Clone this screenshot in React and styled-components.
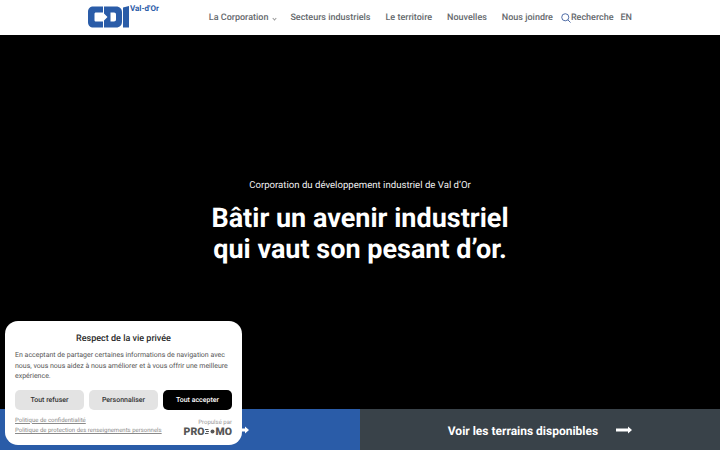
import React from 'react';
import styled, { createGlobalStyle } from 'styled-components';

const GlobalStyle = createGlobalStyle`
  html, body {
    margin: 0;
    padding: 0;
    background: #000;
    font-family: Roboto, "Liberation Sans", sans-serif;
    text-rendering: geometricPrecision;
  }
`;

const Page = styled.div`
  width: 720px;
  height: 450px;
  display: flex;
  flex-direction: column;
  overflow: hidden;
`;

const Header = styled.header`
  height: 35px;
  flex: none;
  background: #fff;
  display: flex;
  align-items: center;
  justify-content: space-between;
  padding: 0 88px;
`;

const LogoWrap = styled.a`
  display: flex;
  flex: none;
  align-items: flex-start;
  height: 35px;
`;

const LogoTag = styled.span`
  font-size: 8px;
  font-weight: 700;
  color: #2a5ca8;
  margin: 4px 0 0 1px;
  line-height: 9px;
  white-space: nowrap;
`;

const Nav = styled.nav`
  display: flex;
  align-items: center;
  height: 100%;
  padding-top: 1px;
  box-sizing: border-box;
`;

const NavItem = styled.a`
  font-size: 9px;
  color: #65696d;
  font-weight: 500;
  margin-left: ${(p) => p.$gap}px;
  display: flex;
  align-items: center;
  white-space: nowrap;
`;

const Caret = styled.span`
  width: 2px;
  height: 2px;
  margin-left: 5px;
  margin-top: 1px;
  border-right: 0.7px solid #999;
  border-bottom: 0.7px solid #999;
  transform: rotate(45deg);
`;

const Hero = styled.main`
  flex: 1;
  background: #000;
  color: #fff;
  display: flex;
  flex-direction: column;
  align-items: center;
  padding-top: 145px;
`;

const Kicker = styled.p`
  margin: 0;
  font-size: 9.600px;
  line-height: 12px;
  color: #f1f1f1;
`;

const Title = styled.h1`
  margin: 11px 0 0;
  font-size: 27px;
  line-height: 31px;
  font-weight: 700;
  text-align: center;
`;

const Split = styled.div`
  height: 41px;
  flex: none;
  display: grid;
  grid-template-columns: 1fr 1fr;
`;

const SplitLink = styled.a`
  background: ${(p) => p.$bg};
  color: #fff;
  display: flex;
  align-items: center;
  justify-content: center;
  gap: 18px;
  padding-top: 2px;
  padding-left: ${(p) => p.$pad || 0}px;
  font-size: 12px;
  font-weight: 700;
  white-space: nowrap;
`;

const Consent = styled.aside`
  position: fixed;
  left: 5px;
  top: 321px;
  width: 237px;
  height: 124px;
  box-sizing: border-box;
  padding: 12px 10px 0;
  background: #fff;
  border-radius: 13px;
  color: #4c4c4c;
`;

const ConsentTitle = styled.h2`
  margin: 0;
  text-align: center;
  font-size: 9px;
  line-height: 12px;
  font-weight: 500;
  color: #2b2b2b;
`;

const ConsentText = styled.p`
  margin: 5px 0 0;
  font-size: 7px;
  line-height: 10.500px;
  color: #555;
`;

const Buttons = styled.div`
  display: grid;
  grid-template-columns: repeat(3, 69px);
  gap: 5px;
  margin-top: 8px;
`;

const ConsentButton = styled.button`
  height: 20px;
  padding: 0;
  border: 0;
  border-radius: 5px;
  font-family: inherit;
  text-rendering: inherit;
  font-size: 7px;
  font-weight: 500;
  background: ${(p) => (p.$primary ? '#000' : '#e3e3e3')};
  color: ${(p) => (p.$primary ? '#fff' : '#333')};
`;

const ConsentFoot = styled.div`
  display: flex;
  justify-content: space-between;
  margin-top: 7px;
`;

const Policies = styled.div`
  display: flex;
  flex-direction: column;
  gap: 3.500px;
`;

const PolicyLink = styled.a`
  font-size: 6px;
  line-height: 7px;
  color: #8a8a8a;
  text-decoration: underline;
  white-space: nowrap;
`;

const Powered = styled.div`
  display: flex;
  flex-direction: column;
  align-items: flex-end;
  padding-top: 2px;
`;

const PoweredLabel = styled.span`
  font-size: 6px;
  line-height: 7px;
  color: #999;
`;

const PoweredBrand = styled.span`
  display: flex;
  align-items: center;
  gap: 0.500px;
  font-size: 10.500px;
  line-height: 12px;
  font-weight: 900;
  color: #565656;
`;

function CdiLogo() {
  return (
    <svg width="41" height="22" viewBox="0 0 41 22" style={{ marginTop: 6, flex: 'none' }}>
      <path
        d="M15 0.500H5.500C2 0.500 0 2.500 0 6V16C0 19.500 2 21.500 5.500 21.500H15V15.500H8C7 15.500 6.500 15 6.500 14V8C6.500 7 7 6.500 8 6.500H15Z"
        fill="#2a5ca8"
      />
      <path
        d="M16 0.500H28C32 0.500 34 3 34 6.500V15.500C34 19 32 21.500 28 21.500H16V14.500L19.500 11L16 7.500ZM22.500 6.500V15.500H26C27.300 15.500 28 14.800 28 13.500V8.500C28 7.200 27.300 6.500 26 6.500Z"
        fill="#2a5ca8"
        fillRule="evenodd"
      />
      <path d="M35 1.500L41 0V21.500H35Z" fill="#2a5ca8" />
    </svg>
  );
}

const SearchSvg = styled.svg`
  flex: none;
  margin-top: -1px;
`;

function SearchIcon() {
  return (
    <SearchSvg width="10" height="10" viewBox="0 0 11 11" fill="none" stroke="#3f5f9e" strokeWidth="1">
      <circle cx="4.700" cy="4.700" r="3.900" />
      <path d="M7.500 7.500L10.500 10.500" />
    </SearchSvg>
  );
}

const ArrowSvg = styled.svg`
  flex: none;
  margin-top: -1px;
`;

function ArrowIcon() {
  return (
    <ArrowSvg width="16" height="8" viewBox="0 0 16 8" fill="#fff">
      <path d="M0 2.500H12V0.500L16 4L12 7.500V5.500H0Z" />
    </ArrowSvg>
  );
}

function PromoMark() {
  return (
    <svg width="10" height="7" viewBox="0 0 10 7" fill="#565656">
      <rect x="0" y="1" width="3.500" height="1" />
      <rect x="0" y="5" width="3.500" height="1" />
      <rect x="1" y="3" width="3" height="1" />
      <circle cx="7.500" cy="3.500" r="2" />
    </svg>
  );
}

export default function App() {
  return (
    <>
      <GlobalStyle />
      <Page>
        <Header>
          <LogoWrap>
            <CdiLogo />
            <LogoTag>Val-d'Or</LogoTag>
          </LogoWrap>
          <Nav>
            <NavItem $gap={0}>
              La Corporation
              <Caret />
            </NavItem>
            <NavItem $gap={14}>Secteurs industriels</NavItem>
            <NavItem $gap={15}>Le territoire</NavItem>
            <NavItem $gap={15}>Nouvelles</NavItem>
            <NavItem $gap={15}>Nous joindre</NavItem>
            <NavItem $gap={8}>
              <SearchIcon />
              Recherche
            </NavItem>
            <NavItem $gap={7}>EN</NavItem>
          </Nav>
        </Header>
        <Hero>
          <Kicker>Corporation du développement industriel de Val d’Or</Kicker>
          <Title>
            Bâtir un avenir industriel
            <br />
            qui vaut son pesant d’or.
          </Title>
        </Hero>
        <Split>
          <SplitLink $bg="#2a5ca8" $pad={6}>
            Voir les bâtiments
            <ArrowIcon />
          </SplitLink>
          <SplitLink $bg="#394249">
            Voir les terrains disponibles
            <ArrowIcon />
          </SplitLink>
        </Split>
      </Page>
      <Consent>
        <ConsentTitle>Respect de la vie privée</ConsentTitle>
        <ConsentText>
          En acceptant de partager certaines informations de navigation avec nous, vous nous aidez à
          nous améliorer et à vous offrir une meilleure expérience.
        </ConsentText>
        <Buttons>
          <ConsentButton>Tout refuser</ConsentButton>
          <ConsentButton>Personnaliser</ConsentButton>
          <ConsentButton $primary>Tout accepter</ConsentButton>
        </Buttons>
        <ConsentFoot>
          <Policies>
            <PolicyLink>Politique de confidentialité</PolicyLink>
            <PolicyLink>Politique de protection des renseignements personnels</PolicyLink>
          </Policies>
          <Powered>
            <PoweredLabel>Propulsé par</PoweredLabel>
            <PoweredBrand>
              PRO
              <PromoMark />
              MO
            </PoweredBrand>
          </Powered>
        </ConsentFoot>
      </Consent>
    </>
  );
}
